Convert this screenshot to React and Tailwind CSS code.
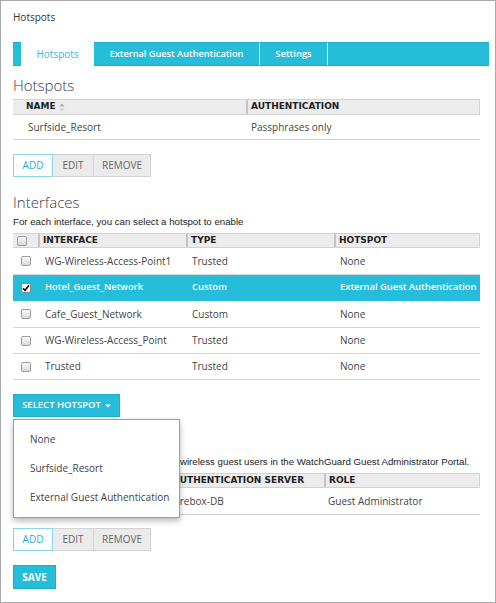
import React from "react";

const OS = "font-['Open_Sans',sans-serif]";
const DV = "font-['DejaVu_Sans',sans-serif]";
const AR = "font-['Liberation_Sans',Arial,sans-serif]";

function Check({ checked }) {
  if (checked) {
    return (
      <span className="flex h-[10px] w-[10px] items-center justify-center rounded-[2px] border border-[#8a8a8a] bg-white">
        <svg width="8" height="8" viewBox="0 0 8 8">
          <path d="M1 4.2 L3 6.4 L7 1.2" fill="none" stroke="#111" strokeWidth="1.7" />
        </svg>
      </span>
    );
  }
  return (
    <span className="block h-[10px] w-[10px] rounded-[2px] border border-[#9c9c9c] bg-gradient-to-b from-[#fafafa] to-[#d8d8d8]" />
  );
}

function ButtonGroup() {
  return (
    <div className={`flex h-[23px] text-[10px] ${OS}`}>
      <div className="flex w-[40px] items-center justify-center border border-[#8ad6e8] bg-white text-[#1eaed0]">ADD</div>
      <div className="flex w-[41px] items-center justify-center border border-l-0 border-[#d2d2d2] bg-[#ebebeb] text-[#666]">EDIT</div>
      <div className="flex w-[57px] items-center justify-center border border-l-0 border-[#d2d2d2] bg-[#ebebeb] text-[#666]">REMOVE</div>
    </div>
  );
}

const rows = [
  { h: "h-[27px]", name: "WG-Wireless-Access-Point1", type: "Trusted", hs: "None" },
  { h: "h-[26px]", name: "Hotel_Guest_Network", type: "Custom", hs: "External Guest Authentication", sel: true },
  { h: "h-[27px]", name: "Cafe_Guest_Network", type: "Custom", hs: "None" },
  { h: "h-[26px]", name: "WG-Wireless-Access_Point", type: "Trusted", hs: "None" },
  { h: "h-[26px]", name: "Trusted", type: "Trusted", hs: "None" },
];

export default function App() {
  return (
    <div className="relative h-[603px] w-[496px] overflow-hidden border border-[#a9a9a9] bg-white pl-[12px] pt-[9px]">
      <div className={`h-[14px] text-[10px] leading-[14px] text-[#333] ${OS}`}>Hotspots</div>

      {/* Tabs */}
      <div className={`mt-[18px] flex h-[24px] w-[476px] border-y border-[#1eaecb] bg-[#25bdd9] pl-[8px] ${OS}`}>
        <div className="-mb-px -mt-px flex w-[73px] shrink-0 items-center justify-center bg-white text-[10px] text-[#3cb6d6]">Hotspots</div>
        <div className="flex w-[165px] shrink-0 items-center justify-center whitespace-nowrap text-[9.2px] font-semibold text-white">External Guest Authentication</div>
        <div className="w-px shrink-0 bg-white" />
        <div className="flex w-[67px] shrink-0 items-center justify-center text-[9.4px] font-semibold text-white">Settings</div>
        <div className="w-px shrink-0 bg-white" />
      </div>

      {/* Hotspots */}
      <div className={`mt-[9px] h-[20px] text-[15px] font-light leading-[20px] text-[#3a3a3a] ${OS}`}>Hotspots</div>
      <div className="mt-[4px] w-[467px]">
        <div className={`flex h-[16px] border-y border-r border-[#d2d2d2] bg-[#ececec] text-[9px] font-bold text-[#1e1e1e] ${DV}`}>
          <div className="flex w-[233px] shrink-0 items-center pl-[13px]">
            NAME
            <svg className="ml-[3px]" width="6" height="9" viewBox="0 0 6 9">
              <path d="M3 0.5 L5.5 3.5 L0.5 3.5 Z" fill="#a8a8a8" />
              <path d="M3 8.5 L5.5 5.5 L0.5 5.5 Z" fill="#cfcfcf" />
            </svg>
          </div>
          <div className="flex flex-1 items-center border-l-2 border-[#c4c4c4] pl-[3px]">AUTHENTICATION</div>
        </div>
        <div className={`flex h-[25px] items-center border-b border-[#cfcfcf] text-[10px] text-[#444] ${OS}`}>
          <div className="w-[233px] shrink-0 pl-[15px]">Surfside_Resort</div>
          <div className="flex-1 pl-[5px]">Passphrases only</div>
        </div>
      </div>
      <div className="mt-[14px]">
        <ButtonGroup />
      </div>

      {/* Interfaces */}
      <div className={`mt-[15px] h-[20px] text-[15px] font-light leading-[20px] text-[#3a3a3a] ${OS}`}>Interfaces</div>
      <div className={`mt-[4px] h-[12px] text-[9.7px] leading-[12px] text-[#222] ${AR}`}>For each interface, you can select a hotspot to enable</div>
      <div className="mt-[5px] w-[467px]">
        <div className={`flex h-[15px] border-y border-r border-[#d2d2d2] bg-[#ececec] text-[9px] font-bold text-[#1e1e1e] ${DV}`}>
          <div className="flex w-[25px] shrink-0 items-center pl-[4px]">
            <Check />
          </div>
          <div className="flex w-[148px] shrink-0 items-center border-l-2 border-[#c4c4c4] pl-[3px]">INTERFACE</div>
          <div className="flex w-[148px] shrink-0 items-center border-l-2 border-[#c4c4c4] pl-[3px]">TYPE</div>
          <div className="flex flex-1 items-center border-l-2 border-[#c4c4c4] pl-[3px]">HOTSPOT</div>
        </div>
        {rows.map((r) => (
          <div
            key={r.name}
            className={`flex ${r.h} items-center border-b ${OS} ${
              r.sel
                ? "border-[#25bdd9] bg-[#25bdd9] text-[9.4px] font-semibold text-white"
                : "border-[#d4d4d4] text-[10px] text-[#444]"
            }`}
          >
            <div className="flex w-[25px] shrink-0 justify-center">
              <Check checked={r.sel} />
            </div>
            <div className="w-[148px] shrink-0 pl-[7px]">{r.name}</div>
            <div className="w-[148px] shrink-0 pl-[6px]">{r.type}</div>
            <div className="min-w-0 flex-1 whitespace-nowrap pl-[6px]">{r.hs}</div>
          </div>
        ))}
      </div>

      {/* Select hotspot + menu */}
      <div className="relative mt-[14px] w-[107px]">
        <div className={`flex h-[23px] items-center justify-center gap-[4px] border border-[#1eaecb] bg-[#25bdd9] text-[9.5px] font-semibold text-white ${OS}`}>
          SELECT HOTSPOT
          <svg width="6" height="4" viewBox="0 0 6 4">
            <path d="M0 0.5 L6 0.5 L3 3.5 Z" fill="#fff" />
          </svg>
        </div>
        <div className={`absolute left-0 top-[25px] z-10 w-[167px] border border-[#9e9e9e] bg-white py-[5px] text-[10px] text-[#444] shadow-[0_3px_6px_rgba(0,0,0,0.28)] ${OS}`}>
          <div className="flex h-[29px] items-center pl-[16px]">None</div>
          <div className="flex h-[29px] items-center pl-[16px]">Surfside_Resort</div>
          <div className="flex h-[29px] items-center whitespace-nowrap pl-[16px]">External Guest Authentication</div>
        </div>
      </div>

      {/* Guest administrators */}
      <div className={`mt-[15px] h-[20px] text-[15px] font-light leading-[20px] text-[#3a3a3a] ${OS}`}>Guest Administrators</div>
      <div className={`mt-[4px] h-[12px] whitespace-nowrap text-[9.7px] leading-[12px] text-[#222] ${AR}`}>
        Specify the accounts that can manage wireless guest users in the WatchGuard Guest Administrator Portal.
      </div>
      <div className="mt-[5px] w-[467px]">
        <div className={`flex h-[15px] border-y border-r border-[#d2d2d2] bg-[#ececec] text-[9px] font-bold text-[#1e1e1e] ${DV}`}>
          <div className="flex w-[155px] shrink-0 items-center pl-[13px]">NAME</div>
          <div className="flex w-[156px] shrink-0 items-center border-l-2 border-[#c4c4c4] pl-[3px]">AUTHENTICATION SERVER</div>
          <div className="flex flex-1 items-center border-l-2 border-[#c4c4c4] pl-[3px]">ROLE</div>
        </div>
        <div className={`flex h-[27px] items-center border-b border-[#cfcfcf] text-[10px] text-[#444] ${OS}`}>
          <div className="w-[155px] shrink-0 pl-[15px]">guestadmin</div>
          <div className="w-[156px] shrink-0 pl-[4px]">Firebox-DB</div>
          <div className="flex-1 pl-[4px]">Guest Administrator</div>
        </div>
      </div>
      <div className="mt-[13px]">
        <ButtonGroup />
      </div>

      <div className={`mt-[14px] flex h-[24px] w-[43px] items-center justify-center border border-[#1eaecb] bg-[#25bdd9] text-[10px] font-bold text-white ${OS}`}>
        SAVE
      </div>
    </div>
  );
}
